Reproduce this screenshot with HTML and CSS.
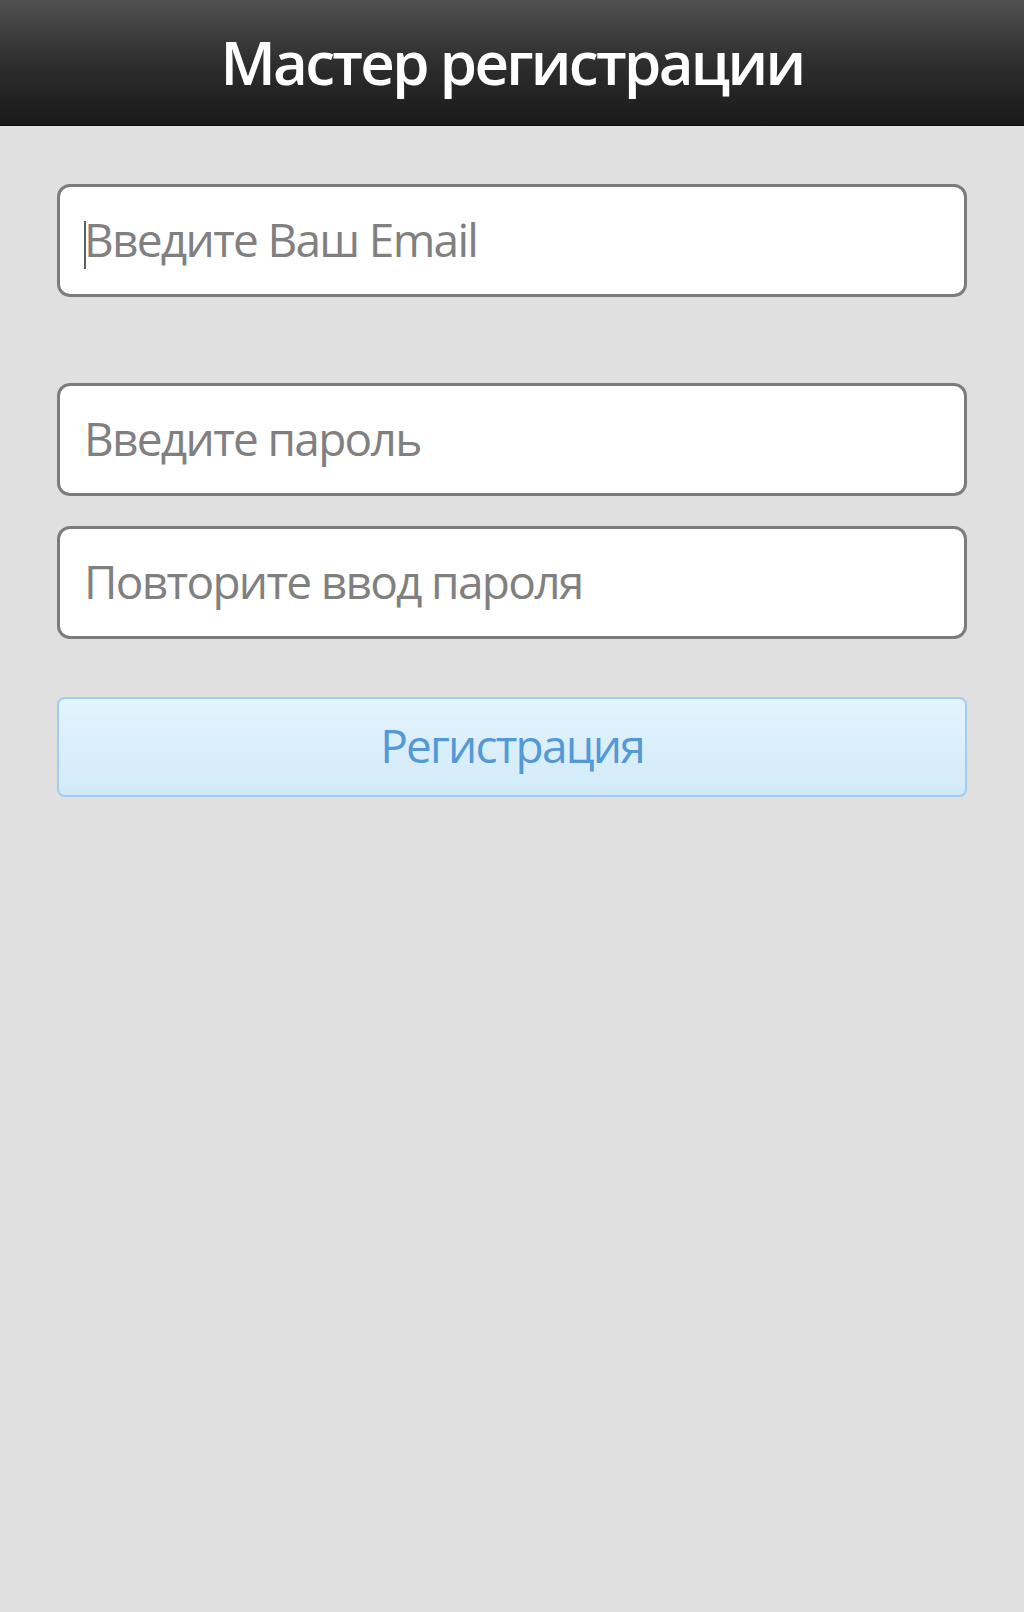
FILE: index.html
```html
<!DOCTYPE html>
<html lang="ru">
<head>
<meta charset="utf-8">
<title>Мастер регистрации</title>
<link rel="stylesheet" href="styles.css">
</head>
<body>
<header class="topbar">
  <h1 class="title">Мастер регистрации</h1>
</header>
<main class="form">
  <div class="field field-email">
    <span class="caret"></span><span class="ph">Введите Ваш Email</span>
  </div>
  <div class="group">
    <div class="field"><span class="ph">Введите пароль</span></div>
    <div class="field"><span class="ph">Повторите ввод пароля</span></div>
  </div>
  <button class="btn" type="button">Регистрация</button>
</main>
</body>
</html>
```

FILE: styles.css
```css
html, body {
  margin: 0;
  padding: 0;
}
body {
  background: #e0e0e0;
  font-family: "Open Sans", "Noto Sans", "DejaVu Sans", sans-serif;
  min-height: 1612px;
}
.topbar {
  height: 126px;
  background: linear-gradient(#505050 0%, #2e2e2e 50%, #191919 100%);
  border-bottom: 1px solid #0c0c0c;
  display: flex;
  align-items: center;
  justify-content: center;
  box-sizing: border-box;
}
.title {
  margin: 0;
  color: #ffffff;
  font-size: 60px;
  font-weight: 600;
  line-height: 1;
  letter-spacing: -2.7px;
  padding-bottom: 2px;
}
.form {
  padding: 58px 57px 0;
  display: flex;
  flex-direction: column;
}
.field {
  height: 113px;
  box-sizing: border-box;
  background: #ffffff;
  border: 3px solid #7c7c7c;
  border-radius: 13px;
  display: flex;
  align-items: center;
  padding-left: 24px;
}
.ph {
  color: #808080;
  font-size: 46px;
  line-height: 1;
  letter-spacing: -1.7px;
  padding-bottom: 4px;
}
.caret {
  width: 2px;
  height: 48px;
  background: #606060;
  margin-right: -2px;
  margin-top: 8px;
}
.group {
  margin-top: 86px;
  display: flex;
  flex-direction: column;
  gap: 30px;
}
.btn {
  margin-top: 58px;
  height: 100px;
  border: 2px solid #a2cdf0;
  border-radius: 8px;
  background: linear-gradient(#e3f4fd, #d2eaf8);
  color: #5399d6;
  font-family: "Open Sans", "Noto Sans", "DejaVu Sans", sans-serif;
  font-size: 46px;
  line-height: 1;
  letter-spacing: -1.8px;
  padding: 0 0 4px;
}
```
